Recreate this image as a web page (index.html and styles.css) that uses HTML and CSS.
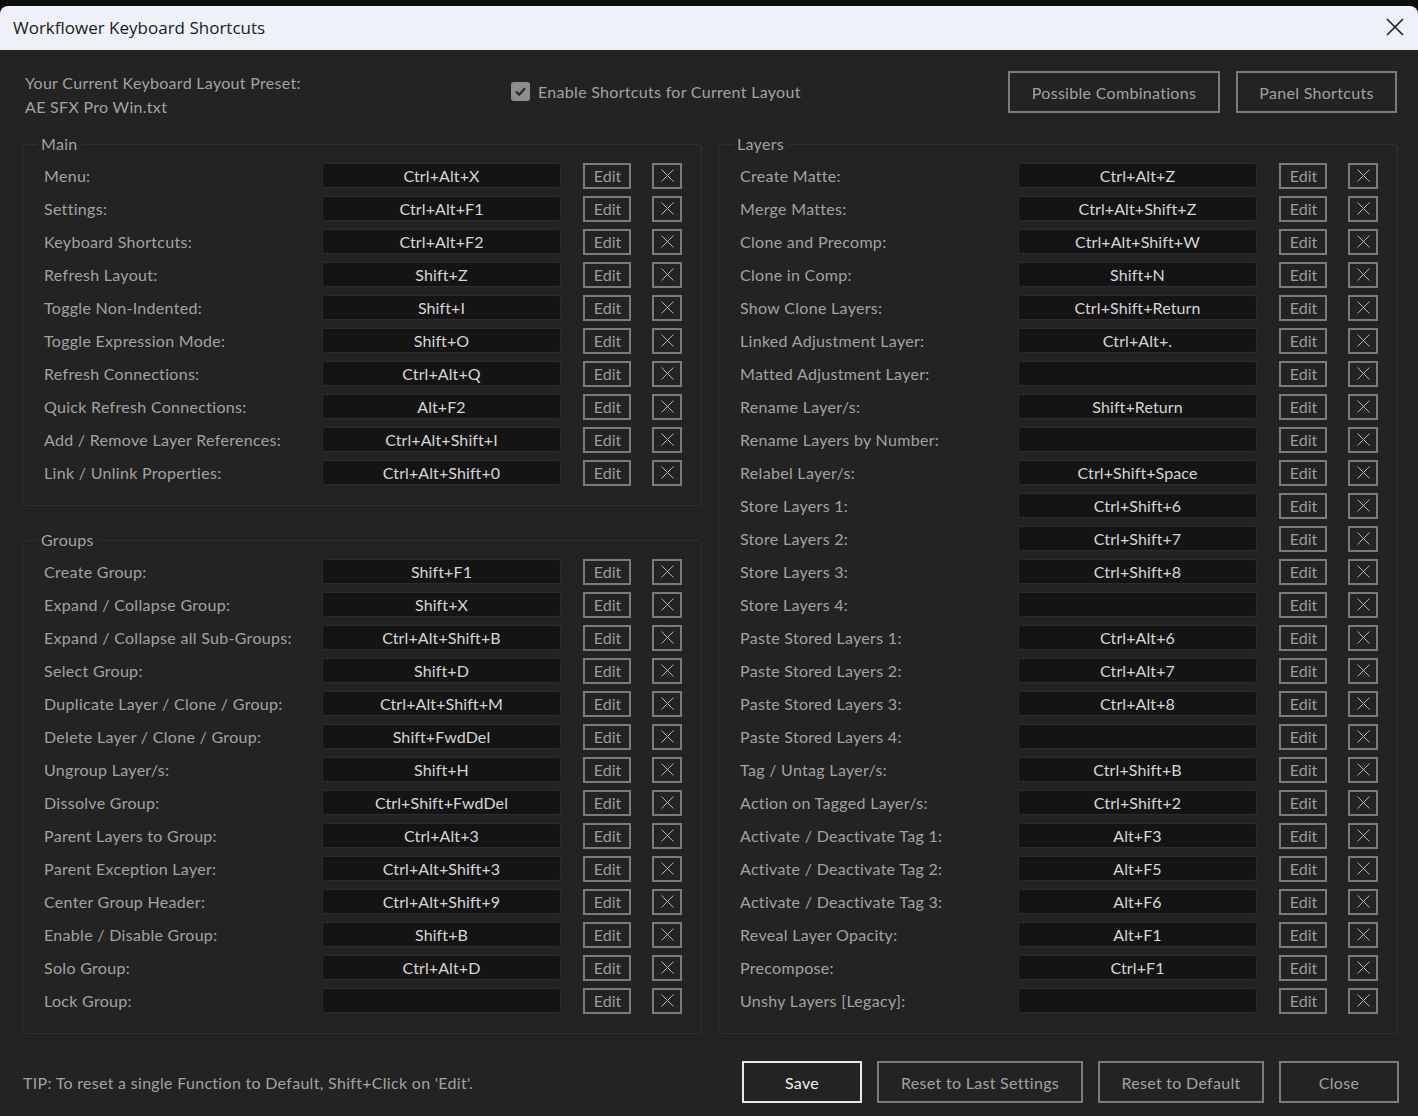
FILE: index.html
```html
<!DOCTYPE html>
<html lang="en">
<head>
    <meta charset="UTF-8">
    <title>Workflower Keyboard Shortcuts</title>
    <link rel="stylesheet" href="styles.css">
</head>
<body>
    <div class="window">
        <div class="titlebar">
            <span class="title">Workflower Keyboard Shortcuts</span>
            <svg class="title-close" width="18" height="18" viewBox="0 0 18 18">
                <path d="M1 1 L17 17 M17 1 L1 17" stroke="#1b1b1b" stroke-width="1.6" fill="none"/>
            </svg>
        </div>

        <div class="content">
            <div class="top-row">
                <div class="preset">
                    <div>Your Current Keyboard Layout Preset:</div>
                    <div>AE SFX Pro Win.txt</div>
                </div>
                <label class="enable">
                    <span class="checkbox">
                        <svg width="19" height="19" viewBox="0 0 19 19">
                            <path d="M5 9.5 L8.2 12.7 L14 6.3" stroke="#262626" stroke-width="2.2" fill="none"/>
                        </svg>
                    </span>
                    Enable Shortcuts for Current Layout
                </label>
                <div class="top-buttons">
                    <button class="btn btn-combos">Possible Combinations</button>
                    <button class="btn btn-panel">Panel Shortcuts</button>
                </div>
            </div>

            <div class="columns">
                <div class="column">
                    <fieldset class="group">
                        <legend>Main</legend>
                        <div class="row"><span class="row-label">Menu:</span><div class="key">Ctrl+Alt+X</div><button class="edit">Edit</button><button class="clear"><svg width="13" height="13" viewBox="0 0 13 13"><path d="M0.5 0.5 L12.5 12.5 M12.5 0.5 L0.5 12.5"/></svg></button></div>
                        <div class="row"><span class="row-label">Settings:</span><div class="key">Ctrl+Alt+F1</div><button class="edit">Edit</button><button class="clear"><svg width="13" height="13" viewBox="0 0 13 13"><path d="M0.5 0.5 L12.5 12.5 M12.5 0.5 L0.5 12.5"/></svg></button></div>
                        <div class="row"><span class="row-label">Keyboard Shortcuts:</span><div class="key">Ctrl+Alt+F2</div><button class="edit">Edit</button><button class="clear"><svg width="13" height="13" viewBox="0 0 13 13"><path d="M0.5 0.5 L12.5 12.5 M12.5 0.5 L0.5 12.5"/></svg></button></div>
                        <div class="row"><span class="row-label">Refresh Layout:</span><div class="key">Shift+Z</div><button class="edit">Edit</button><button class="clear"><svg width="13" height="13" viewBox="0 0 13 13"><path d="M0.5 0.5 L12.5 12.5 M12.5 0.5 L0.5 12.5"/></svg></button></div>
                        <div class="row"><span class="row-label">Toggle Non-Indented:</span><div class="key">Shift+I</div><button class="edit">Edit</button><button class="clear"><svg width="13" height="13" viewBox="0 0 13 13"><path d="M0.5 0.5 L12.5 12.5 M12.5 0.5 L0.5 12.5"/></svg></button></div>
                        <div class="row"><span class="row-label">Toggle Expression Mode:</span><div class="key">Shift+O</div><button class="edit">Edit</button><button class="clear"><svg width="13" height="13" viewBox="0 0 13 13"><path d="M0.5 0.5 L12.5 12.5 M12.5 0.5 L0.5 12.5"/></svg></button></div>
                        <div class="row"><span class="row-label">Refresh Connections:</span><div class="key">Ctrl+Alt+Q</div><button class="edit">Edit</button><button class="clear"><svg width="13" height="13" viewBox="0 0 13 13"><path d="M0.5 0.5 L12.5 12.5 M12.5 0.5 L0.5 12.5"/></svg></button></div>
                        <div class="row"><span class="row-label">Quick Refresh Connections:</span><div class="key">Alt+F2</div><button class="edit">Edit</button><button class="clear"><svg width="13" height="13" viewBox="0 0 13 13"><path d="M0.5 0.5 L12.5 12.5 M12.5 0.5 L0.5 12.5"/></svg></button></div>
                        <div class="row"><span class="row-label">Add / Remove Layer References:</span><div class="key">Ctrl+Alt+Shift+I</div><button class="edit">Edit</button><button class="clear"><svg width="13" height="13" viewBox="0 0 13 13"><path d="M0.5 0.5 L12.5 12.5 M12.5 0.5 L0.5 12.5"/></svg></button></div>
                        <div class="row"><span class="row-label">Link / Unlink Properties:</span><div class="key">Ctrl+Alt+Shift+0</div><button class="edit">Edit</button><button class="clear"><svg width="13" height="13" viewBox="0 0 13 13"><path d="M0.5 0.5 L12.5 12.5 M12.5 0.5 L0.5 12.5"/></svg></button></div>
                    </fieldset>

                    <fieldset class="group">
                        <legend>Groups</legend>
                        <div class="row"><span class="row-label">Create Group:</span><div class="key">Shift+F1</div><button class="edit">Edit</button><button class="clear"><svg width="13" height="13" viewBox="0 0 13 13"><path d="M0.5 0.5 L12.5 12.5 M12.5 0.5 L0.5 12.5"/></svg></button></div>
                        <div class="row"><span class="row-label">Expand / Collapse Group:</span><div class="key">Shift+X</div><button class="edit">Edit</button><button class="clear"><svg width="13" height="13" viewBox="0 0 13 13"><path d="M0.5 0.5 L12.5 12.5 M12.5 0.5 L0.5 12.5"/></svg></button></div>
                        <div class="row"><span class="row-label">Expand / Collapse all Sub-Groups:</span><div class="key">Ctrl+Alt+Shift+B</div><button class="edit">Edit</button><button class="clear"><svg width="13" height="13" viewBox="0 0 13 13"><path d="M0.5 0.5 L12.5 12.5 M12.5 0.5 L0.5 12.5"/></svg></button></div>
                        <div class="row"><span class="row-label">Select Group:</span><div class="key">Shift+D</div><button class="edit">Edit</button><button class="clear"><svg width="13" height="13" viewBox="0 0 13 13"><path d="M0.5 0.5 L12.5 12.5 M12.5 0.5 L0.5 12.5"/></svg></button></div>
                        <div class="row"><span class="row-label">Duplicate Layer / Clone / Group:</span><div class="key">Ctrl+Alt+Shift+M</div><button class="edit">Edit</button><button class="clear"><svg width="13" height="13" viewBox="0 0 13 13"><path d="M0.5 0.5 L12.5 12.5 M12.5 0.5 L0.5 12.5"/></svg></button></div>
                        <div class="row"><span class="row-label">Delete Layer / Clone / Group:</span><div class="key">Shift+FwdDel</div><button class="edit">Edit</button><button class="clear"><svg width="13" height="13" viewBox="0 0 13 13"><path d="M0.5 0.5 L12.5 12.5 M12.5 0.5 L0.5 12.5"/></svg></button></div>
                        <div class="row"><span class="row-label">Ungroup Layer/s:</span><div class="key">Shift+H</div><button class="edit">Edit</button><button class="clear"><svg width="13" height="13" viewBox="0 0 13 13"><path d="M0.5 0.5 L12.5 12.5 M12.5 0.5 L0.5 12.5"/></svg></button></div>
                        <div class="row"><span class="row-label">Dissolve Group:</span><div class="key">Ctrl+Shift+FwdDel</div><button class="edit">Edit</button><button class="clear"><svg width="13" height="13" viewBox="0 0 13 13"><path d="M0.5 0.5 L12.5 12.5 M12.5 0.5 L0.5 12.5"/></svg></button></div>
                        <div class="row"><span class="row-label">Parent Layers to Group:</span><div class="key">Ctrl+Alt+3</div><button class="edit">Edit</button><button class="clear"><svg width="13" height="13" viewBox="0 0 13 13"><path d="M0.5 0.5 L12.5 12.5 M12.5 0.5 L0.5 12.5"/></svg></button></div>
                        <div class="row"><span class="row-label">Parent Exception Layer:</span><div class="key">Ctrl+Alt+Shift+3</div><button class="edit">Edit</button><button class="clear"><svg width="13" height="13" viewBox="0 0 13 13"><path d="M0.5 0.5 L12.5 12.5 M12.5 0.5 L0.5 12.5"/></svg></button></div>
                        <div class="row"><span class="row-label">Center Group Header:</span><div class="key">Ctrl+Alt+Shift+9</div><button class="edit">Edit</button><button class="clear"><svg width="13" height="13" viewBox="0 0 13 13"><path d="M0.5 0.5 L12.5 12.5 M12.5 0.5 L0.5 12.5"/></svg></button></div>
                        <div class="row"><span class="row-label">Enable / Disable Group:</span><div class="key">Shift+B</div><button class="edit">Edit</button><button class="clear"><svg width="13" height="13" viewBox="0 0 13 13"><path d="M0.5 0.5 L12.5 12.5 M12.5 0.5 L0.5 12.5"/></svg></button></div>
                        <div class="row"><span class="row-label">Solo Group:</span><div class="key">Ctrl+Alt+D</div><button class="edit">Edit</button><button class="clear"><svg width="13" height="13" viewBox="0 0 13 13"><path d="M0.5 0.5 L12.5 12.5 M12.5 0.5 L0.5 12.5"/></svg></button></div>
                        <div class="row"><span class="row-label">Lock Group:</span><div class="key"></div><button class="edit">Edit</button><button class="clear"><svg width="13" height="13" viewBox="0 0 13 13"><path d="M0.5 0.5 L12.5 12.5 M12.5 0.5 L0.5 12.5"/></svg></button></div>
                    </fieldset>
                </div>

                <div class="column">
                    <fieldset class="group group-tall">
                        <legend>Layers</legend>
                        <div class="row"><span class="row-label">Create Matte:</span><div class="key">Ctrl+Alt+Z</div><button class="edit">Edit</button><button class="clear"><svg width="13" height="13" viewBox="0 0 13 13"><path d="M0.5 0.5 L12.5 12.5 M12.5 0.5 L0.5 12.5"/></svg></button></div>
                        <div class="row"><span class="row-label">Merge Mattes:</span><div class="key">Ctrl+Alt+Shift+Z</div><button class="edit">Edit</button><button class="clear"><svg width="13" height="13" viewBox="0 0 13 13"><path d="M0.5 0.5 L12.5 12.5 M12.5 0.5 L0.5 12.5"/></svg></button></div>
                        <div class="row"><span class="row-label">Clone and Precomp:</span><div class="key">Ctrl+Alt+Shift+W</div><button class="edit">Edit</button><button class="clear"><svg width="13" height="13" viewBox="0 0 13 13"><path d="M0.5 0.5 L12.5 12.5 M12.5 0.5 L0.5 12.5"/></svg></button></div>
                        <div class="row"><span class="row-label">Clone in Comp:</span><div class="key">Shift+N</div><button class="edit">Edit</button><button class="clear"><svg width="13" height="13" viewBox="0 0 13 13"><path d="M0.5 0.5 L12.5 12.5 M12.5 0.5 L0.5 12.5"/></svg></button></div>
                        <div class="row"><span class="row-label">Show Clone Layers:</span><div class="key">Ctrl+Shift+Return</div><button class="edit">Edit</button><button class="clear"><svg width="13" height="13" viewBox="0 0 13 13"><path d="M0.5 0.5 L12.5 12.5 M12.5 0.5 L0.5 12.5"/></svg></button></div>
                        <div class="row"><span class="row-label">Linked Adjustment Layer:</span><div class="key">Ctrl+Alt+.</div><button class="edit">Edit</button><button class="clear"><svg width="13" height="13" viewBox="0 0 13 13"><path d="M0.5 0.5 L12.5 12.5 M12.5 0.5 L0.5 12.5"/></svg></button></div>
                        <div class="row"><span class="row-label">Matted Adjustment Layer:</span><div class="key"></div><button class="edit">Edit</button><button class="clear"><svg width="13" height="13" viewBox="0 0 13 13"><path d="M0.5 0.5 L12.5 12.5 M12.5 0.5 L0.5 12.5"/></svg></button></div>
                        <div class="row"><span class="row-label">Rename Layer/s:</span><div class="key">Shift+Return</div><button class="edit">Edit</button><button class="clear"><svg width="13" height="13" viewBox="0 0 13 13"><path d="M0.5 0.5 L12.5 12.5 M12.5 0.5 L0.5 12.5"/></svg></button></div>
                        <div class="row"><span class="row-label">Rename Layers by Number:</span><div class="key"></div><button class="edit">Edit</button><button class="clear"><svg width="13" height="13" viewBox="0 0 13 13"><path d="M0.5 0.5 L12.5 12.5 M12.5 0.5 L0.5 12.5"/></svg></button></div>
                        <div class="row"><span class="row-label">Relabel Layer/s:</span><div class="key">Ctrl+Shift+Space</div><button class="edit">Edit</button><button class="clear"><svg width="13" height="13" viewBox="0 0 13 13"><path d="M0.5 0.5 L12.5 12.5 M12.5 0.5 L0.5 12.5"/></svg></button></div>
                        <div class="row"><span class="row-label">Store Layers 1:</span><div class="key">Ctrl+Shift+6</div><button class="edit">Edit</button><button class="clear"><svg width="13" height="13" viewBox="0 0 13 13"><path d="M0.5 0.5 L12.5 12.5 M12.5 0.5 L0.5 12.5"/></svg></button></div>
                        <div class="row"><span class="row-label">Store Layers 2:</span><div class="key">Ctrl+Shift+7</div><button class="edit">Edit</button><button class="clear"><svg width="13" height="13" viewBox="0 0 13 13"><path d="M0.5 0.5 L12.5 12.5 M12.5 0.5 L0.5 12.5"/></svg></button></div>
                        <div class="row"><span class="row-label">Store Layers 3:</span><div class="key">Ctrl+Shift+8</div><button class="edit">Edit</button><button class="clear"><svg width="13" height="13" viewBox="0 0 13 13"><path d="M0.5 0.5 L12.5 12.5 M12.5 0.5 L0.5 12.5"/></svg></button></div>
                        <div class="row"><span class="row-label">Store Layers 4:</span><div class="key"></div><button class="edit">Edit</button><button class="clear"><svg width="13" height="13" viewBox="0 0 13 13"><path d="M0.5 0.5 L12.5 12.5 M12.5 0.5 L0.5 12.5"/></svg></button></div>
                        <div class="row"><span class="row-label">Paste Stored Layers 1:</span><div class="key">Ctrl+Alt+6</div><button class="edit">Edit</button><button class="clear"><svg width="13" height="13" viewBox="0 0 13 13"><path d="M0.5 0.5 L12.5 12.5 M12.5 0.5 L0.5 12.5"/></svg></button></div>
                        <div class="row"><span class="row-label">Paste Stored Layers 2:</span><div class="key">Ctrl+Alt+7</div><button class="edit">Edit</button><button class="clear"><svg width="13" height="13" viewBox="0 0 13 13"><path d="M0.5 0.5 L12.5 12.5 M12.5 0.5 L0.5 12.5"/></svg></button></div>
                        <div class="row"><span class="row-label">Paste Stored Layers 3:</span><div class="key">Ctrl+Alt+8</div><button class="edit">Edit</button><button class="clear"><svg width="13" height="13" viewBox="0 0 13 13"><path d="M0.5 0.5 L12.5 12.5 M12.5 0.5 L0.5 12.5"/></svg></button></div>
                        <div class="row"><span class="row-label">Paste Stored Layers 4:</span><div class="key"></div><button class="edit">Edit</button><button class="clear"><svg width="13" height="13" viewBox="0 0 13 13"><path d="M0.5 0.5 L12.5 12.5 M12.5 0.5 L0.5 12.5"/></svg></button></div>
                        <div class="row"><span class="row-label">Tag / Untag Layer/s:</span><div class="key">Ctrl+Shift+B</div><button class="edit">Edit</button><button class="clear"><svg width="13" height="13" viewBox="0 0 13 13"><path d="M0.5 0.5 L12.5 12.5 M12.5 0.5 L0.5 12.5"/></svg></button></div>
                        <div class="row"><span class="row-label">Action on Tagged Layer/s:</span><div class="key">Ctrl+Shift+2</div><button class="edit">Edit</button><button class="clear"><svg width="13" height="13" viewBox="0 0 13 13"><path d="M0.5 0.5 L12.5 12.5 M12.5 0.5 L0.5 12.5"/></svg></button></div>
                        <div class="row"><span class="row-label">Activate / Deactivate Tag 1:</span><div class="key">Alt+F3</div><button class="edit">Edit</button><button class="clear"><svg width="13" height="13" viewBox="0 0 13 13"><path d="M0.5 0.5 L12.5 12.5 M12.5 0.5 L0.5 12.5"/></svg></button></div>
                        <div class="row"><span class="row-label">Activate / Deactivate Tag 2:</span><div class="key">Alt+F5</div><button class="edit">Edit</button><button class="clear"><svg width="13" height="13" viewBox="0 0 13 13"><path d="M0.5 0.5 L12.5 12.5 M12.5 0.5 L0.5 12.5"/></svg></button></div>
                        <div class="row"><span class="row-label">Activate / Deactivate Tag 3:</span><div class="key">Alt+F6</div><button class="edit">Edit</button><button class="clear"><svg width="13" height="13" viewBox="0 0 13 13"><path d="M0.5 0.5 L12.5 12.5 M12.5 0.5 L0.5 12.5"/></svg></button></div>
                        <div class="row"><span class="row-label">Reveal Layer Opacity:</span><div class="key">Alt+F1</div><button class="edit">Edit</button><button class="clear"><svg width="13" height="13" viewBox="0 0 13 13"><path d="M0.5 0.5 L12.5 12.5 M12.5 0.5 L0.5 12.5"/></svg></button></div>
                        <div class="row"><span class="row-label">Precompose:</span><div class="key">Ctrl+F1</div><button class="edit">Edit</button><button class="clear"><svg width="13" height="13" viewBox="0 0 13 13"><path d="M0.5 0.5 L12.5 12.5 M12.5 0.5 L0.5 12.5"/></svg></button></div>
                        <div class="row"><span class="row-label">Unshy Layers [Legacy]:</span><div class="key"></div><button class="edit">Edit</button><button class="clear"><svg width="13" height="13" viewBox="0 0 13 13"><path d="M0.5 0.5 L12.5 12.5 M12.5 0.5 L0.5 12.5"/></svg></button></div>
                    </fieldset>
                </div>
            </div>

            <div class="footer">
                <p class="tip">TIP: To reset a single Function to Default, Shift+Click on 'Edit'.</p>
                <div class="footer-buttons">
                    <button class="btn btn-save">Save</button>
                    <button class="btn btn-last">Reset to Last Settings</button>
                    <button class="btn btn-default">Reset to Default</button>
                    <button class="btn btn-close">Close</button>
                </div>
            </div>
        </div>
    </div>
</body>
</html>
```

FILE: styles.css
```css
body {
    margin: 0;
    background-color: #0d0d0d;
    font-family: Lato, "Open Sans", sans-serif;
    font-size: 16px;
    letter-spacing: 0.3px;
    color: #a2a2a2;
}
.window {
    margin-top: 6px;
    height: 1110px;
    background-color: #232323;
    border-radius: 8px 8px 0 0;
    overflow: hidden;
}
.titlebar {
    height: 44px;
    box-sizing: border-box;
    padding: 0 14px 2px 13px;
    background-color: #eef2f8;
    display: flex;
    align-items: center;
    justify-content: space-between;
}
.title {
    font-family: "Open Sans", sans-serif;
    font-size: 17px;
    letter-spacing: 0;
    color: #1a1a1a;
}
.content {
    padding: 21px 20px 0 22px;
}
.top-row {
    display: flex;
    align-items: flex-start;
    height: 63px;
}
.preset {
    width: 486px;
    padding-left: 3px;
    line-height: 24px;
}
.enable {
    display: flex;
    align-items: center;
    gap: 8px;
    height: 40px;
    font-size: 16px;
}
.checkbox {
    width: 19px;
    height: 19px;
    border-radius: 3px;
    background-color: #8d8d8d;
    display: flex;
}
.top-buttons {
    margin-left: auto;
    display: flex;
    gap: 16px;
    padding-right: 1px;
}
button {
    font-family: inherit;
    font-size: 16px;
    letter-spacing: 0.3px;
    background: transparent;
    cursor: pointer;
}
.btn {
    height: 42px;
    border: 2px solid #7b7b7b;
    color: #a2a2a2;
    padding: 0;
}
.btn-combos {
    width: 212px;
}
.btn-panel {
    width: 161px;
}
.columns {
    display: flex;
    gap: 16px;
}
.column {
    width: 680px;
    display: flex;
    flex-direction: column;
    gap: 24px;
}
.group {
    margin: 0;
    border: 1px solid #2f2f2f;
    border-radius: 4px;
    padding: 5px 19px 16px 15px;
}
.group legend {
    padding: 0 4px;
    margin-left: -1px;
    line-height: 20px;
    color: #a2a2a2;
}
.row {
    display: flex;
    align-items: center;
    height: 33px;
    padding-left: 6px;
}
.row-label {
    flex: 1;
}
.key {
    width: 239px;
    height: 25px;
    box-sizing: border-box;
    background-color: #141414;
    border: 1px solid #2c2c2c;
    border-radius: 3px;
    color: #d6d6d6;
    text-align: center;
    line-height: 23px;
    letter-spacing: 0.1px;
    margin-right: 22px;
}
.edit {
    width: 48px;
    height: 26px;
    border: 2px solid #7b7b7b;
    color: #9c9c9c;
    padding: 0 0 0 1px;
    line-height: 22px;
    letter-spacing: 0;
    margin-right: 21px;
}
.clear {
    width: 30px;
    height: 26px;
    border: 2px solid #7b7b7b;
    padding: 0;
    display: flex;
    align-items: center;
    justify-content: center;
}
.clear path {
    stroke: #b4b4b4;
    stroke-width: 1;
    fill: none;
}
.footer {
    display: flex;
    align-items: center;
    justify-content: space-between;
    margin-top: 27px;
}
.tip {
    margin: 0;
    padding-left: 1px;
}
.footer-buttons {
    display: flex;
    gap: 15px;
    margin-right: -1px;
}
.btn-save {
    width: 120px;
    border-color: #e8e8e8;
    color: #f2f2f2;
}
.btn-last {
    width: 206px;
}
.btn-default {
    width: 166px;
}
.btn-close {
    width: 120px;
}
```
